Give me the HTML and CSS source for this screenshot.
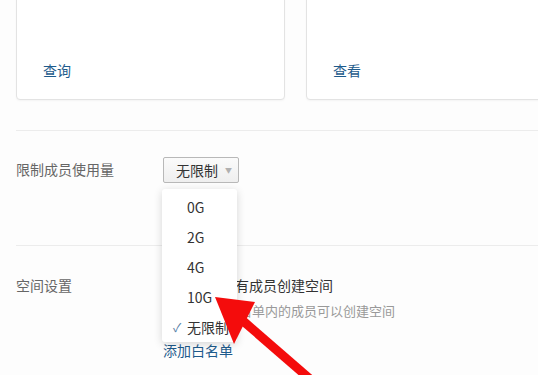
FILE: index.html
```html
<!DOCTYPE html>
<html lang="zh-CN">
<head>
<meta charset="UTF-8">
<meta name="viewport" content="width=device-width, initial-scale=1.0">
<title>成员空间设置</title>
<link rel="stylesheet" href="styles.css">
</head>
<body>

<div class="page">
  <div class="cards">
    <div class="card">
      <a class="link" href="#">查询</a>
    </div>
    <div class="card">
      <a class="link" href="#">查看</a>
    </div>
  </div>

  <div class="setting limit">
    <div class="label">限制成员使用量</div>
    <div class="field">
      <div class="select">
        <span>无限制</span>
        <span class="caret">▼</span>
      </div>
      <ul class="dropdown">
        <li>0G</li>
        <li>2G</li>
        <li>4G</li>
        <li>10G</li>
        <li class="checked"><span class="tick">✓</span>无限制</li>
      </ul>
    </div>
  </div>

  <div class="setting space">
    <div class="label">空间设置</div>
    <div class="field">
      <div class="option"><span class="radio"></span>允许所有成员创建空间</div>
      <div class="hint">只有白名单内的成员可以创建空间</div>
      <a class="link add" href="#">添加白名单</a>
    </div>
  </div>
</div>

<svg class="arrow" width="538" height="375" viewBox="0 0 538 375">
  <line x1="242" y1="320" x2="318" y2="386" stroke="#f40c0c" stroke-width="9"/>
  <polygon points="215,297 255,302 234,344" fill="#f40c0c"/>
</svg>

</body>
</html>
```

FILE: styles.css
```css
body {
  margin: 0;
  width: 538px;
  height: 375px;
  overflow: hidden;
  background-color: #fdfdfd;
  font-family: "Microsoft YaHei", "Noto Sans CJK SC", sans-serif;
  font-size: 14px;
  color: #333;
  position: relative;
}
.page {
  padding-left: 16px;
}
.cards {
  display: flex;
  gap: 21px;
  margin-top: -30px;
  width: 600px;
}
.card {
  flex: 0 0 269px;
  height: 130px;
  background-color: #fff;
  border: 1px solid #e3e3e3;
  border-radius: 4px;
  box-shadow: 0 1px 2px rgba(0, 0, 0, 0.04);
  box-sizing: border-box;
  display: flex;
  align-items: flex-end;
  padding: 0 0 19px 26px;
}
.link {
  color: #1e5b8c;
  text-decoration: none;
  line-height: 20px;
}
.setting {
  display: grid;
  grid-template-columns: 147px 1fr;
  border-top: 1px solid #ececec;
  line-height: 20px;
}
.cards + .setting {
  margin-top: 30px;
}
.limit {
  padding-top: 28px;
  height: 86px;
}
.space {
  padding-top: 29px;
}
.label {
  color: #666;
}
.field {
  position: relative;
}
.select {
  display: inline-flex;
  align-items: center;
  gap: 7px;
  margin-top: -2px;
  height: 24px;
  padding: 0 6px 0 12px;
  border: 1px solid #b8b8b8;
  border-radius: 2px;
  background: linear-gradient(#fbfbfb, #efefef);
  color: #333;
}
.caret {
  font-size: 7px;
  color: #b0b0b0;
}
.dropdown {
  position: absolute;
  left: -1px;
  top: 30px;
  width: 75px;
  margin: 0;
  padding: 3px 0 0;
  list-style: none;
  background-color: #fff;
  border-radius: 3px;
  box-shadow: 0 2px 8px rgba(0, 0, 0, 0.16);
  z-index: 2;
}
.dropdown li {
  height: 30px;
  line-height: 30px;
  padding-left: 25px;
  position: relative;
  color: #333;
}
.tick {
  position: absolute;
  left: 11px;
  color: #5a7fa8;
  font-size: 12px;
}
.option {
  display: flex;
  align-items: center;
  gap: 6px;
  padding-left: 10px;
}
.radio {
  width: 12px;
  height: 12px;
  border: 1px solid #aaa;
  border-radius: 50%;
}
.hint {
  margin-top: 6px;
  padding-left: 37px;
  font-size: 13px;
  color: #999;
}
.add {
  display: block;
  margin-top: 19px;
}
.arrow {
  position: absolute;
  left: 0;
  top: 0;
  z-index: 3;
}
```
